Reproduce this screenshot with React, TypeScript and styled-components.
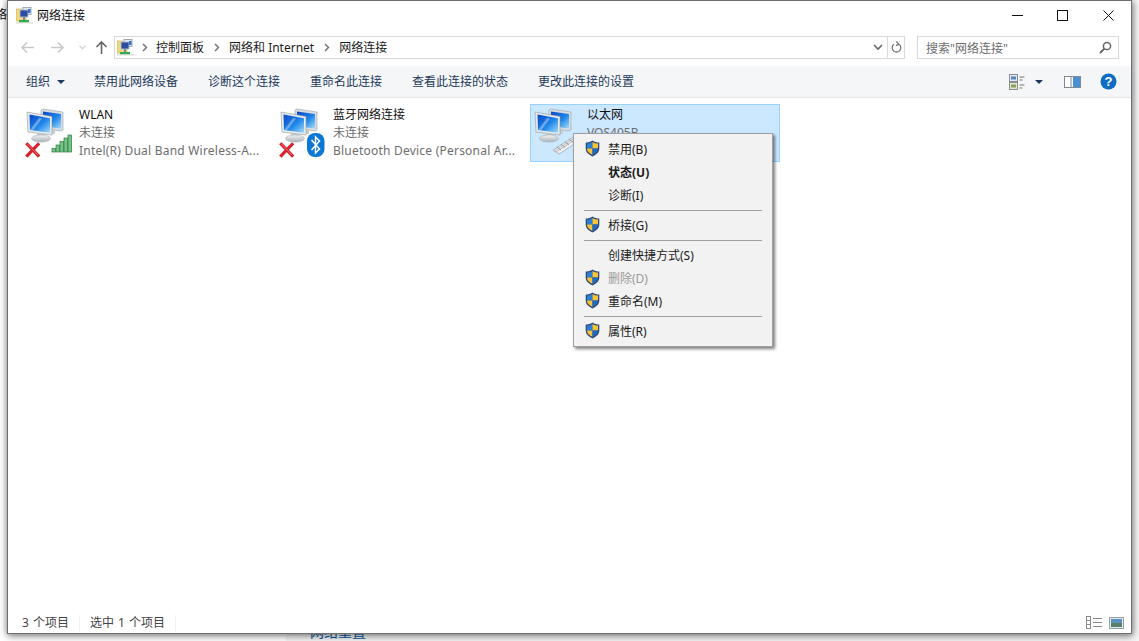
import React, { ReactElement } from "react";
import styled, { createGlobalStyle } from "styled-components";

const GlobalStyle = createGlobalStyle`
  html, body {
    margin: 0;
    padding: 0;
    background: #fff;
    overflow: hidden;
  }
  * { box-sizing: border-box; }
  body {
    font-family: "Noto Sans", "Noto Sans CJK SC", "Liberation Sans", sans-serif;
    font-size: 12px;
  }
`;

const Desktop = styled.div`
  position: relative;
  width: 1139px;
  height: 641px;
  overflow: hidden;
  display: flex;
`;

const BehindSidebar = styled.div`
  width: 286px;
  background: #fff;
  padding-top: 6px;
  color: #111;
  font-size: 12px;
  line-height: 18px;
  overflow: hidden;
`;

const BehindTitle = styled.div`
  margin-left: -17px;
  white-space: nowrap;
`;

const BehindMain = styled.div`
  flex: 1;
  background: #f5f5f5;
  padding: 622px 0 0 24px;
  color: #0a5ea8;
  font-size: 14px;
  line-height: 20px;
  overflow: hidden;
`;

const Window = styled.div`
  position: absolute;
  left: 7px;
  top: 0;
  width: 1125px;
  height: 634px;
  background: #fff;
  border: 1px solid #6f6f6f;
  box-shadow: 0 0 7px rgba(0, 0, 0, 0.45), 1px 3px 7px rgba(0, 0, 0, 0.25);
  display: flex;
  flex-direction: column;
`;

const TitleBar = styled.div`
  height: 31px;
  flex: none;
  display: flex;
  align-items: center;
  padding: 0 0 2px 8px;
  color: #111;
`;

const TitleText = styled.span`
  flex: 1;
  margin-left: 4px;
  line-height: 16px;
`;

const WindowButton = styled.div`
  width: 45.5px;
  height: 29px;
  display: flex;
  align-items: center;
  justify-content: center;
`;

const NavRow = styled.div`
  height: 34px;
  flex: none;
  display: flex;
  align-items: center;
  padding: 0 11px 3px 0;
`;

const NavButtons = styled.div`
  width: 106px;
  flex: none;
  display: flex;
  align-items: center;
`;

const AddressBar = styled.div`
  width: 791px;
  height: 23px;
  flex: none;
  border: 1px solid #d9d9d9;
  display: flex;
  align-items: center;
  padding-left: 2px;
  color: #1b1b1b;
`;

const Crumb = styled.span`
  line-height: 16px;
  white-space: nowrap;
`;

const CrumbArrow = styled.span<{ $w: number }>`
  width: ${(p) => p.$w}px;
  display: flex;
  justify-content: center;
  flex: none;
`;

const AddressEnd = styled.div`
  margin-left: auto;
  display: flex;
  align-items: center;
  height: 100%;
`;

const AddressChevron = styled.div`
  width: 18px;
  display: flex;
  justify-content: center;
`;

const RefreshCell = styled.div`
  width: 17px;
  height: 100%;
  border-left: 1px solid #d9d9d9;
  display: flex;
  align-items: center;
  justify-content: center;
`;

const SearchBox = styled.div`
  width: 202px;
  height: 23px;
  margin-left: 12px;
  flex: none;
  border: 1px solid #d9d9d9;
  display: flex;
  align-items: center;
  justify-content: space-between;
  padding: 0 6px 0 8px;
  color: #6d6d6d;
`;

const Toolbar = styled.div`
  height: 32px;
  flex: none;
  background: #f5f6f7;
  border-bottom: 1px solid #e6e6e6;
  display: flex;
  align-items: center;
  padding: 0 14px 0 18px;
  gap: 30px;
  color: #1e395b;
`;

const ToolItem = styled.span<{ $caret?: boolean }>`
  display: flex;
  align-items: center;
  gap: 7px;
  line-height: 16px;
  white-space: nowrap;
  margin-right: ${(p) => (p.$caret ? -1 : 0)}px;
`;

const ToolRight = styled.div`
  margin-left: auto;
  display: flex;
  align-items: center;
`;

const ToolIcon = styled.span<{ $ml?: number }>`
  display: flex;
  margin-left: ${(p) => p.$ml ?? 0}px;
`;

const Caret = styled.span`
  width: 0;
  height: 0;
  border-left: 4px solid transparent;
  border-right: 4px solid transparent;
  border-top: 4px solid #1e395b;
`;

const Content = styled.div`
  flex: 1;
  display: flex;
  gap: 4px;
  padding: 6px 0 0 14px;
  align-items: flex-start;
`;

const Tile = styled.div<{ $selected?: boolean }>`
  width: 250px;
  height: 58px;
  display: flex;
  padding: 1px;
  border: 1px solid ${(p) => (p.$selected ? "#99d1ff" : "transparent")};
  background: ${(p) => (p.$selected ? "#cce8ff" : "transparent")};
`;

const TileText = styled.div`
  margin-left: 1px;
  display: flex;
  flex-direction: column;
`;

const TileLine = styled.span<{ $muted?: boolean; $spread?: boolean }>`
  height: 18px;
  line-height: 18px;
  white-space: nowrap;
  color: ${(p) => (p.$muted ? "#6d6d6d" : "#111")};
  letter-spacing: ${(p) => (p.$spread ? "0.22px" : "0")};
`;

const StatusBar = styled.div`
  height: 21px;
  flex: none;
  display: flex;
  align-items: center;
  padding-left: 14px;
  color: #444;
  word-spacing: 1px;
`;

const StatusCell = styled.span`
  line-height: 16px;
  padding-right: 10px;
  margin-right: 10px;
  border-right: 1px solid #f0f0f0;
  white-space: nowrap;
`;

const StatusIcons = styled.div`
  margin-left: auto;
  display: flex;
  gap: 6px;
  padding-right: 7px;
  align-items: center;
`;

const Menu = styled.div`
  position: absolute;
  left: 573px;
  top: 133px;
  width: 200px;
  background: #f2f2f2;
  border: 1px solid #a0a0a0;
  box-shadow: 2px 2px 3px rgba(0, 0, 0, 0.5);
  padding: 4px 0 3px;
  color: #1a1a1a;
`;

const MenuRow = styled.div<{ $disabled?: boolean; $bold?: boolean }>`
  height: 23px;
  display: flex;
  align-items: center;
  padding: 0 0 2px 11px;
  color: ${(p) => (p.$disabled ? "#9a9a9a" : "#1a1a1a")};
  font-weight: ${(p) => (p.$bold ? 700 : 400)};
`;

const MenuGlyph = styled.span`
  width: 23px;
  flex: none;
  display: flex;
`;

const MenuSeparator = styled.div`
  height: 1px;
  margin: 3px 10px 3px 10px;
  background: #a0a0a0;
`;

const Arrow = ({ dir, color }: { dir: "left" | "right" | "up"; color: string }) => {
  const d =
    dir === "left"
      ? "M14 7.5H2M7 2.5l-5 5 5 5"
      : dir === "right"
        ? "M1 7.5h12M8 2.5l5 5-5 5"
        : "M7.5 14V2M2.5 7l5-5 5 5";
  return (
    <svg width="15" height="15" viewBox="0 0 15 15" fill="none" stroke={color} strokeWidth="1.6">
      <path d={d} />
    </svg>
  );
};

const FolderNet = () => (
  <svg width="17" height="17" viewBox="0 0 17 17">
    <path d="M0 2h6l1 1h3v11H0z" fill="#f1d77e" stroke="#c9a94c" strokeWidth="0.6" />
    <rect x="7" y="0.5" width="8" height="7" fill="#dfe8f2" stroke="#7e8ea3" strokeWidth="0.7" />
    <rect x="4" y="3" width="8" height="7" fill="#2c4da0" stroke="#bcc8d8" strokeWidth="0.8" />
    <rect x="12" y="2" width="2.5" height="4" fill="#3f6fc0" />
    <rect x="7" y="10" width="2" height="3" fill="#7f8c8d" />
    <rect x="3" y="13" width="10" height="2.4" fill="#2fa84f" />
    <rect x="0" y="15.4" width="17" height="1" fill="#cfd8c9" />
  </svg>
);

const Shield = () => (
  <svg width="15" height="17" viewBox="0 0 15 17">
    <path d="M7.5 .6C5.5 2 3 2.6 .7 2.6v6c0 3.6 3 6.2 6.8 7.8 3.8-1.6 6.8-4.2 6.8-7.8v-6C12 2.6 9.5 2 7.5 .6z" fill="#2f4a78" />
    <path d="M7.5 2v6.6H2V3.6C3.9 3.5 5.9 3 7.5 2z" fill="#2a7fd6" />
    <path d="M7.5 2c1.6 1 3.6 1.5 5.5 1.6v5H7.5z" fill="#f6c33b" />
    <path d="M2 8.6h5.5v6.3C4.6 13.6 2 11.6 2 8.6z" fill="#f6c33b" />
    <path d="M7.5 8.6H13c0 3-2.6 5-5.5 6.3z" fill="#1f6cc2" />
  </svg>
);

const RedCross = () => (
  <g>
    <path d="M3.4 38.4l10.6 11M14 38.4L3.4 49.4" stroke="#d3222b" strokeWidth="3.2" strokeLinecap="square" />
    <path d="M3.4 38l10.6 11" stroke="#f4777d" strokeWidth="0.9" />
  </g>
);

const Signal = () => (
  <g stroke="#2f7d3f" strokeWidth="0.7">
    {[
      [28, 42.5, 3.5],
      [32, 39, 7],
      [36, 35.5, 10.5],
      [40, 32, 14],
      [44, 29, 17],
    ].map(([x, y, h]) => (
      <rect key={x} x={x} y={y} width="3.6" height={h} fill="#74c488" />
    ))}
  </g>
);

const BluetoothBadge = () => (
  <g>
    <rect x="29" y="27" width="17.5" height="24" rx="8" fill="#0b78d6" />
    <path d="M33.5 34l8 9-4 4v-16l4 4-8 9" fill="none" stroke="#fff" strokeWidth="1.5" />
  </g>
);

const CablePlugs = () => (
  <g>
    <path d="M21 44l20-13 6 4-20 13z" fill="#eef0f2" stroke="#969da3" strokeWidth="0.7" />
    <path d="M24 46l20-13M22.5 45l20-13" stroke="#969da3" strokeWidth="0.6" fill="none" />
    <path d="M25 41l4 3M29 38.4l4 3M33 35.8l4 3M37 33.2l4 3" stroke="#868d93" strokeWidth="0.8" fill="none" />
  </g>
);

const NetIcon = ({ id, badge }: { id: string; badge: ReactElement }) => (
  <svg width="54" height="52" viewBox="0 0 54 52">
    <defs>
      <linearGradient id={`${id}-glass`} x1="0" y1="0" x2="1" y2="1">
        <stop offset="0" stopColor="#0a46c4" />
        <stop offset="0.55" stopColor="#1f86ea" />
        <stop offset="1" stopColor="#a6dcf8" />
      </linearGradient>
      <linearGradient id={`${id}-base`} x1="0" y1="0" x2="0" y2="1">
        <stop offset="0" stopColor="#f2f4f5" />
        <stop offset="1" stopColor="#aab1b6" />
      </linearGradient>
    </defs>
    <path d="M17 4l2-1 20 3v18l-3 1-19-3z" fill="#d8dde2" stroke="#9aa3aa" strokeWidth="0.6" />
    <path d="M19 5.5l18 2.4v14.6l-18-2.4z" fill={`url(#${id}-glass)`} />
    <path d="M21 22l10 1v5l-10-1z" fill="#c7ccd0" />
    <path d="M3 6l25 4.5V29L4 26z" fill="#e7eaec" stroke="#8f98a0" strokeWidth="0.6" />
    <path d="M5.5 8.5l20.5 3.7v14.6L6 24z" fill={`url(#${id}-glass)`} />
    <path d="M6 24l9-12 3 .5L9 24.4z" fill="#ffffff" opacity="0.35" />
    <path d="M13 27l8 1v4l-8-1z" fill="#c2c7cb" />
    <ellipse cx="17" cy="32.5" rx="9.5" ry="3.6" fill={`url(#${id}-base)`} stroke="#a3a9ae" strokeWidth="0.5" />
    {badge}
  </svg>
);

const menuEntries = [
  [
    { label: "禁用(B)", shield: true },
    { label: "状态(U)", bold: true },
    { label: "诊断(I)" },
  ],
  [{ label: "桥接(G)", shield: true }],
  [
    { label: "创建快捷方式(S)" },
    { label: "删除(D)", shield: true, disabled: true },
    { label: "重命名(M)", shield: true },
  ],
  [{ label: "属性(R)", shield: true }],
];

const ContextMenu = () => (
  <Menu>
    {menuEntries.map((group, i) => (
      <React.Fragment key={i}>
        {i > 0 && <MenuSeparator />}
        {group.map((e) => (
          <MenuRow key={e.label} $disabled={"disabled" in e} $bold={"bold" in e}>
            <MenuGlyph>{"shield" in e && <Shield />}</MenuGlyph>
            {e.label}
          </MenuRow>
        ))}
      </React.Fragment>
    ))}
  </Menu>
);

const CrumbChevron = () => (
  <svg width="6" height="9" viewBox="0 0 6 9" fill="none" stroke="#6d6d6d" strokeWidth="1.4">
    <path d="M1 1l3.5 3.5L1 8" />
  </svg>
);

export default function App(): ReactElement {
  return (
    <Desktop>
      <GlobalStyle />
      <BehindSidebar>
        <BehindTitle>网络</BehindTitle>
      </BehindSidebar>
      <BehindMain>网络重置</BehindMain>

      <Window>
        <TitleBar>
          <FolderNet />
          <TitleText>网络连接</TitleText>
          <WindowButton>
            <svg width="11" height="11" viewBox="0 0 11 11" stroke="#111" fill="none">
              <path d="M0 5.5h11" />
            </svg>
          </WindowButton>
          <WindowButton>
            <svg width="11" height="11" viewBox="0 0 11 11" stroke="#111" fill="none">
              <rect x="0.5" y="0.5" width="10" height="10" />
            </svg>
          </WindowButton>
          <WindowButton>
            <svg width="11" height="11" viewBox="0 0 11 11" stroke="#111" fill="none">
              <path d="M.5.5l10 10M10.5.5l-10 10" />
            </svg>
          </WindowButton>
        </TitleBar>

        <NavRow>
          <NavButtons>
            <ToolIcon $ml={12}>
              <Arrow dir="left" color="#c9c9c9" />
            </ToolIcon>
            <ToolIcon $ml={15}>
              <Arrow dir="right" color="#c9c9c9" />
            </ToolIcon>
            <ToolIcon $ml={14}>
              <svg width="7" height="5" viewBox="0 0 7 5" fill="none" stroke="#d5d5d5" strokeWidth="1.3">
                <path d="M.5.8l3 3 3-3" />
              </svg>
            </ToolIcon>
            <ToolIcon $ml={8}>
              <Arrow dir="up" color="#666" />
            </ToolIcon>
          </NavButtons>
          <AddressBar>
            <FolderNet />
            <CrumbArrow $w={22}>
              <CrumbChevron />
            </CrumbArrow>
            <Crumb>控制面板</Crumb>
            <CrumbArrow $w={25}>
              <CrumbChevron />
            </CrumbArrow>
            <Crumb>网络和 Internet</Crumb>
            <CrumbArrow $w={25}>
              <CrumbChevron />
            </CrumbArrow>
            <Crumb>网络连接</Crumb>
            <AddressEnd>
              <AddressChevron>
                <svg width="10" height="7" viewBox="0 0 10 7" fill="none" stroke="#666" strokeWidth="1.6">
                  <path d="M1 1l4 4 4-4" />
                </svg>
              </AddressChevron>
              <RefreshCell>
                <svg width="11" height="13" viewBox="0 0 11 13" fill="none" stroke="#777" strokeWidth="1.3">
                  <path d="M3 3.2a4.3 4.3 0 1 0 5 0M5.2 .6l2.8 2.6-3 1.4" />
                </svg>
              </RefreshCell>
            </AddressEnd>
          </AddressBar>
          <SearchBox>
            <span>搜索"网络连接"</span>
            <svg width="13" height="13" viewBox="0 0 13 13" fill="none" stroke="#666" strokeWidth="1.5">
              <circle cx="8" cy="5" r="3.6" />
              <path d="M5.4 7.6L1 12" strokeWidth="2" />
            </svg>
          </SearchBox>
        </NavRow>

        <Toolbar>
          <ToolItem $caret>
            组织
            <Caret />
          </ToolItem>
          <ToolItem>禁用此网络设备</ToolItem>
          <ToolItem>诊断这个连接</ToolItem>
          <ToolItem>重命名此连接</ToolItem>
          <ToolItem>查看此连接的状态</ToolItem>
          <ToolItem>更改此连接的设置</ToolItem>
          <ToolRight>
            <ToolIcon>
              <svg width="16" height="16" viewBox="0 0 16 16">
                <rect x="0.5" y="0.5" width="8" height="7" fill="#dfe8ee" stroke="#8a8f94" />
                <rect x="2" y="2.5" width="5" height="3" fill="#5a86b5" />
                <rect x="0.5" y="8.5" width="8" height="7" fill="#e7e6c8" stroke="#8a8f94" />
                <rect x="2" y="10.5" width="5" height="3" fill="#8aa35a" />
                <path d="M10.5 3h5M10.5 6h3M10.5 11h5M10.5 14h3" stroke="#777" />
              </svg>
            </ToolIcon>
            <ToolIcon $ml={10}>
              <Caret />
            </ToolIcon>
            <ToolIcon $ml={21}>
              <svg width="17" height="12" viewBox="0 0 17 12">
                <rect x="0.5" y="0.5" width="16" height="11" fill="#fff" stroke="#7f8a94" />
                <rect x="9" y="1" width="7" height="10" fill="#4a90d6" />
                <path d="M7 1v10" stroke="#7f8a94" />
              </svg>
            </ToolIcon>
            <ToolIcon $ml={19}>
              <svg width="17" height="17" viewBox="0 0 17 17">
                <circle cx="8.5" cy="8.5" r="8" fill="#0f6cc4" />
                <text
                  x="8.5"
                  y="13"
                  textAnchor="middle"
                  fontSize="13"
                  fontWeight="700"
                  fontFamily="Liberation Sans, sans-serif"
                  fill="#fff"
                >
                  ?
                </text>
              </svg>
            </ToolIcon>
          </ToolRight>
        </Toolbar>

        <Content>
          <Tile>
            <NetIcon
              id="wlan"
              badge={
                <>
                  <RedCross />
                  <Signal />
                </>
              }
            />
            <TileText>
              <TileLine>WLAN</TileLine>
              <TileLine $muted>未连接</TileLine>
              <TileLine $muted $spread>
                Intel(R) Dual Band Wireless-A...
              </TileLine>
            </TileText>
          </Tile>
          <Tile>
            <NetIcon
              id="bt"
              badge={
                <>
                  <RedCross />
                  <BluetoothBadge />
                </>
              }
            />
            <TileText>
              <TileLine>蓝牙网络连接</TileLine>
              <TileLine $muted>未连接</TileLine>
              <TileLine $muted $spread>
                Bluetooth Device (Personal Ar...
              </TileLine>
            </TileText>
          </Tile>
          <Tile $selected>
            <NetIcon id="eth" badge={<CablePlugs />} />
            <TileText>
              <TileLine>以太网</TileLine>
              <TileLine $muted>VOS405B</TileLine>
            </TileText>
          </Tile>
        </Content>

        <StatusBar>
          <StatusCell>3 个项目</StatusCell>
          <StatusCell>选中 1 个项目</StatusCell>
          <StatusIcons>
            <svg width="17" height="13" viewBox="0 0 17 13" fill="none" stroke="#8a8a8a">
              <rect x="0.5" y="0.5" width="4" height="12" />
              <path d="M.5 4.5h4M.5 8.5h4M7 2.5h9M7 6.5h9M7 10.5h9" />
            </svg>
            <svg width="15" height="12" viewBox="0 0 15 12">
              <rect x="0.5" y="0.5" width="14" height="11" fill="#dfe9ef" stroke="#9aa0a5" />
              <rect x="2" y="2" width="11" height="4" fill="#5c93c4" />
              <rect x="2" y="6" width="11" height="4" fill="#5b7f6a" />
            </svg>
          </StatusIcons>
        </StatusBar>
      </Window>

      <ContextMenu />
    </Desktop>
  );
}
